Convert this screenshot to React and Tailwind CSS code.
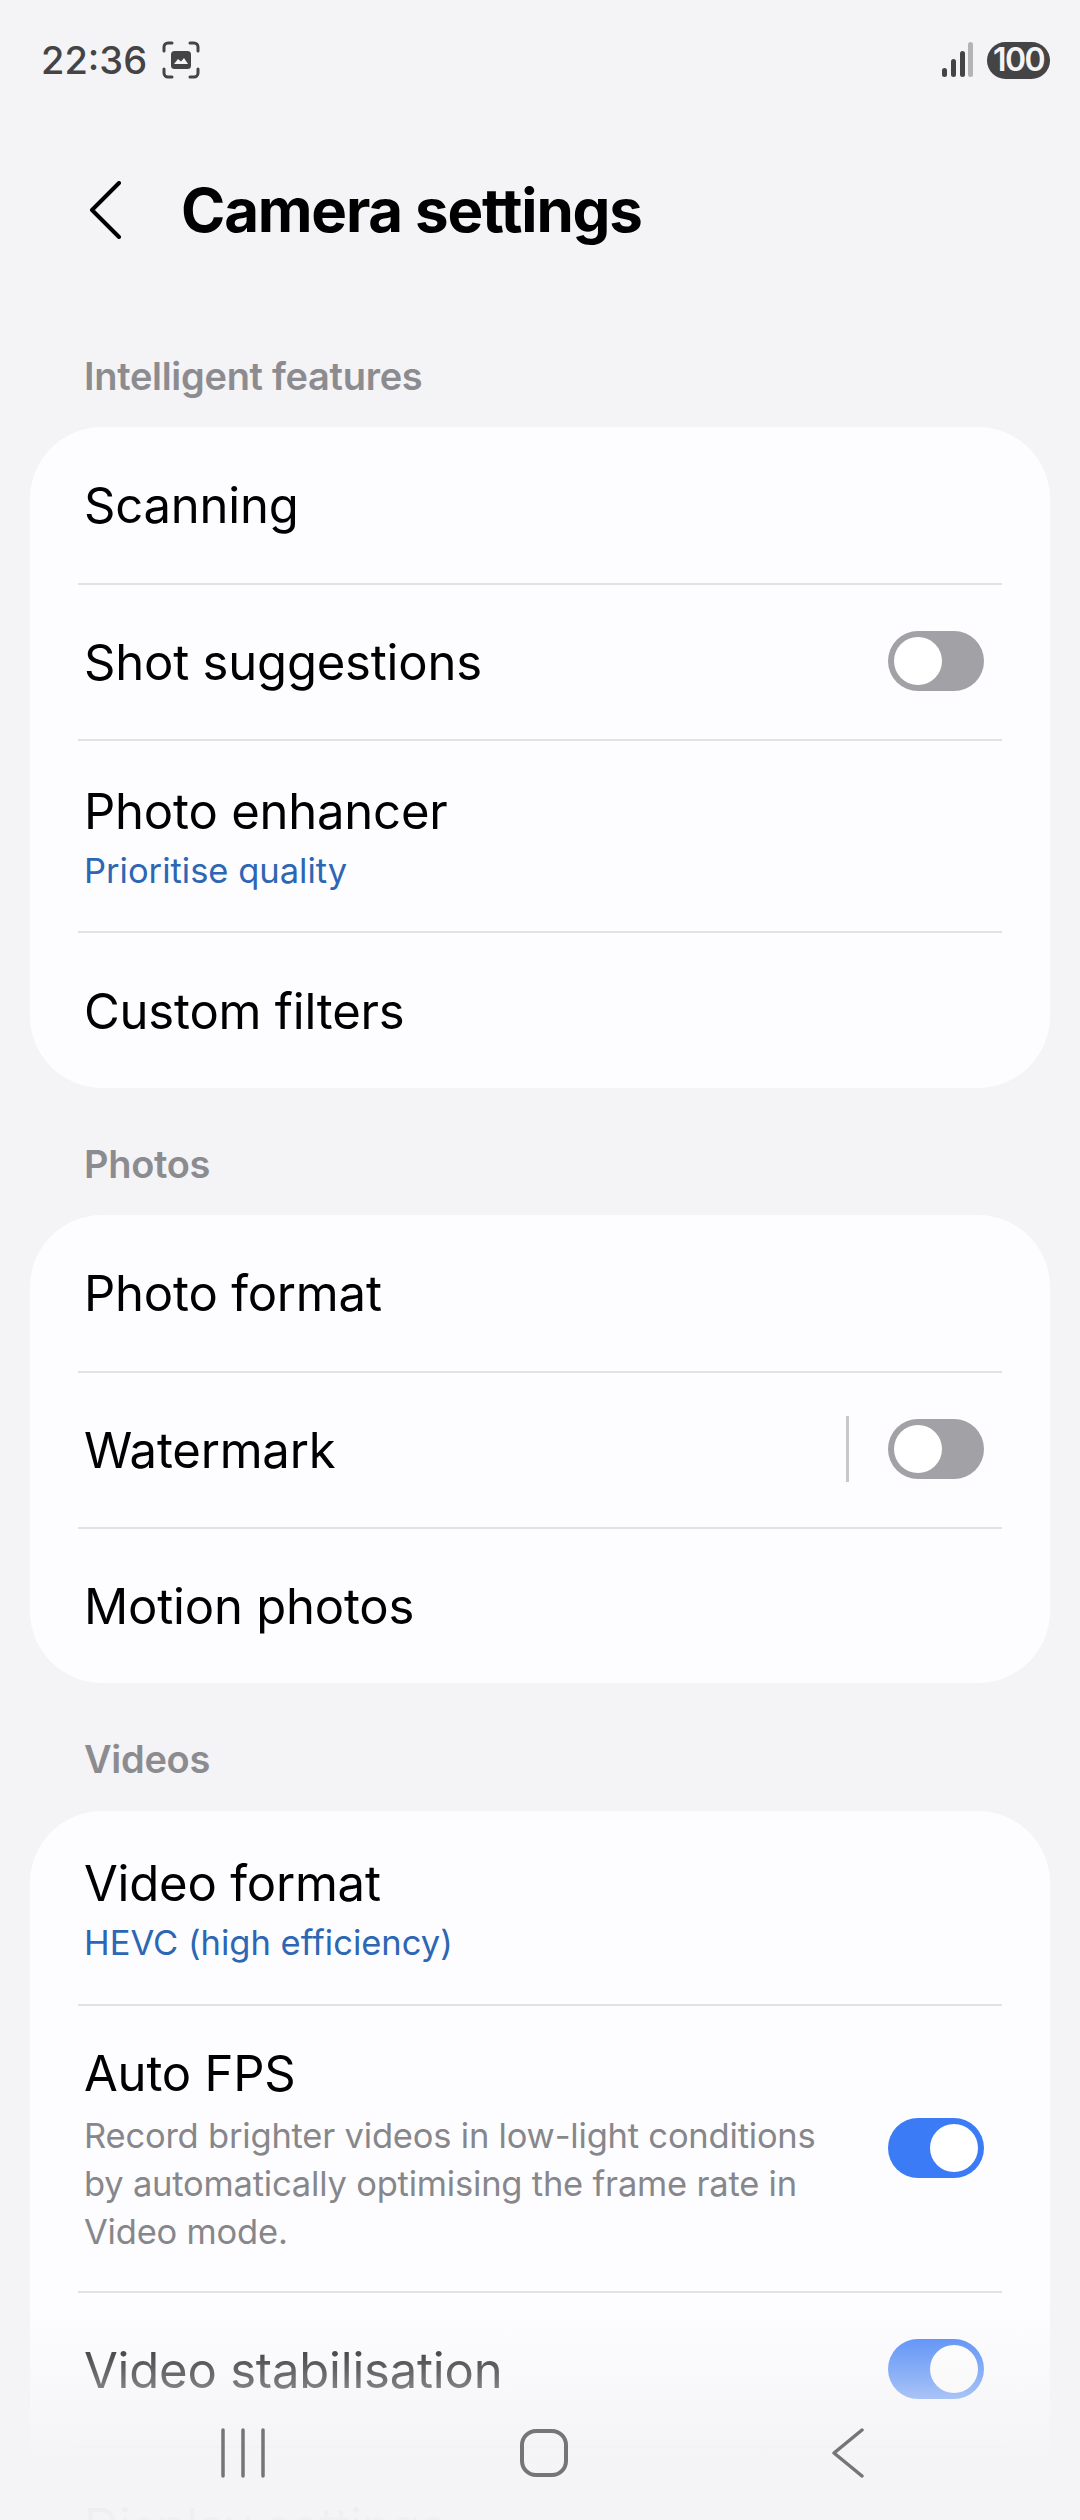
const Toggle = ({ on }) => (
	<div
		className={`flex h-[60px] w-[96px] shrink-0 items-center rounded-full p-[6px] ${
			on ? "justify-end bg-[#3b7cf6]" : "justify-start bg-[#a2a2a6]"
		}`}
	>
		<div className="h-[48px] w-[48px] rounded-full bg-white" />
	</div>
);

const Row = ({ title, sub, desc, toggle, divider, className = "" }) => (
	<div
		className={`flex items-center justify-between border-b-2 border-[#e2e2e4] pl-[6px] pr-[18px] last:border-b-0 ${className}`}
	>
		<div className={sub ? "pt-[6px]" : "pt-[2px]"}>
			<div className="text-[49px] leading-[60px] tracking-[-0.2px] text-black">{title}</div>
			{sub && <div className="mt-[4px] text-[34.5px] leading-[50px] text-[#2c66b4]">{sub}</div>}
			{desc && (
				<div className="mt-[8px] w-[780px] text-[34.5px] leading-[48px] tracking-[-0.2px] text-[#87878b]">
					{desc}
				</div>
			)}
		</div>
		<div className="mb-[2px] flex items-center">
			{divider && <div className="mr-[39px] h-[66px] w-[3px] bg-[#c8c8ca]" />}
			{toggle}
		</div>
	</div>
);

const Header = ({ children, className = "" }) => (
	<div className={`pl-[84px] text-[38px] font-semibold leading-[50px] tracking-[-0.3px] text-[#8c8c90] ${className}`}>
		{children}
	</div>
);

const Card = ({ children, className = "" }) => (
	<div className={`mx-[30px] rounded-[72px] bg-[#fdfdff] px-[48px] ${className}`}>{children}</div>
);

const App = () => {
	return (
		<div className="relative h-[2520px] w-[1080px] overflow-hidden bg-[#f4f4f6] font-['Inter',sans-serif]">
			{/* status bar */}
			<div className="flex h-[120px] items-center justify-between pl-[41px] pr-[30px]">
				<div className="flex items-center gap-[15px]">
					<span className="text-[38px] font-medium leading-none text-[#444446]">22:36</span>
					<svg width="38" height="38" viewBox="0 0 38 38" fill="none">
						<path
							d="M2 10V6a4 4 0 0 1 4-4h4M28 2h4a4 4 0 0 1 4 4v4M36 28v4a4 4 0 0 1-4 4h-4M10 36H6a4 4 0 0 1-4-4v-4"
							stroke="#444446"
							strokeWidth="3"
							strokeLinecap="round"
						/>
						<rect x="9" y="10" width="20" height="18" rx="3.5" fill="#444446" />
						<path d="M12 23l4-5 3 2.5 3-3.5 4 6z" fill="#f4f4f6" />
					</svg>
				</div>
				<div className="flex items-center gap-[14px]">
					<svg width="32" height="36" viewBox="0 0 32 36">
						<rect x="1" y="26" width="5" height="9" rx="2.5" fill="#444446" />
						<rect x="10" y="17" width="5" height="18" rx="2.5" fill="#444446" />
						<rect x="19" y="9" width="5" height="26" rx="2.5" fill="#444446" />
						<rect x="27" y="0" width="5" height="35" rx="2.5" fill="#b4b4b6" />
					</svg>
					<div className="flex h-[37px] w-[63px] items-center justify-center rounded-full bg-[#444446] text-[32px] font-semibold leading-none tracking-[-1.5px] text-[#f4f4f6]">
						100
					</div>
				</div>
			</div>

			{/* title */}
			<div className="mt-[50px] flex h-[80px] items-center pl-[88px]">
				<svg width="34" height="58" viewBox="0 0 34 58" fill="none" className="shrink-0">
					<path d="M31 2L4 29l27 27" stroke="#000" strokeWidth="4" strokeLinecap="round" strokeLinejoin="round" />
				</svg>
				<h1 className="ml-[59px] text-[60px] font-bold leading-none tracking-[-1.2px] text-black">
					Camera settings
				</h1>
			</div>

			<Header className="mt-[101px]">Intelligent features</Header>
			<Card className="mt-[26px]">
				<Row title="Scanning" className="h-[158px]" />
				<Row title="Shot suggestions" toggle={<Toggle />} className="h-[156px]" />
				<Row title="Photo enhancer" sub="Prioritise quality" className="h-[192px]" />
				<Row title="Custom filters" className="h-[155px]" />
			</Card>

			<Header className="mt-[51px]">Photos</Header>
			<Card className="mt-[26px]">
				<Row title="Photo format" className="h-[158px]" />
				<Row title="Watermark" divider toggle={<Toggle />} className="h-[156px]" />
				<Row title="Motion photos" className="h-[154px]" />
			</Card>

			<Header className="mt-[51px]">Videos</Header>
			<Card className="mt-[27px]">
				<Row title="Video format" sub="HEVC (high efficiency)" className="h-[195px]" />
				<Row
					title="Auto FPS"
					desc="Record brighter videos in low-light conditions by automatically optimising the frame rate in Video mode."
					toggle={<Toggle on />}
					className="h-[287px]"
				/>
				<Row title="Video stabilisation" toggle={<Toggle on />} className="h-[155px]" />
				<Row title="Display settings" className="h-[155px]" />
			</Card>

			{/* fade + nav bar over the list */}
			<div className="absolute inset-x-0 bottom-0 h-[220px] bg-[linear-gradient(to_bottom,#f4f4f600_0%,#f4f4f673_35%,#f4f4f6ee_68%,#f4f4f6fb_100%)]" />
			<div className="absolute inset-x-0 bottom-[42px] flex h-[50px] items-center">
				<svg className="absolute left-[219px]" width="50" height="50" viewBox="0 0 50 50" fill="none">
					<path d="M4 2v46M24 2v46M44 2v46" stroke="#757578" strokeWidth="3.5" strokeLinecap="round" />
				</svg>
				<svg className="absolute left-[519px]" width="50" height="50" viewBox="0 0 50 50" fill="none">
					<rect x="3" y="3" width="44" height="44" rx="14" stroke="#757578" strokeWidth="4" />
				</svg>
				<svg className="absolute left-[831px]" width="34" height="50" viewBox="0 0 34 50" fill="none">
					<path d="M31 2L3 25l28 23" stroke="#757578" strokeWidth="3.5" strokeLinecap="round" strokeLinejoin="round" />
				</svg>
			</div>
		</div>
	);
};

export default App;
